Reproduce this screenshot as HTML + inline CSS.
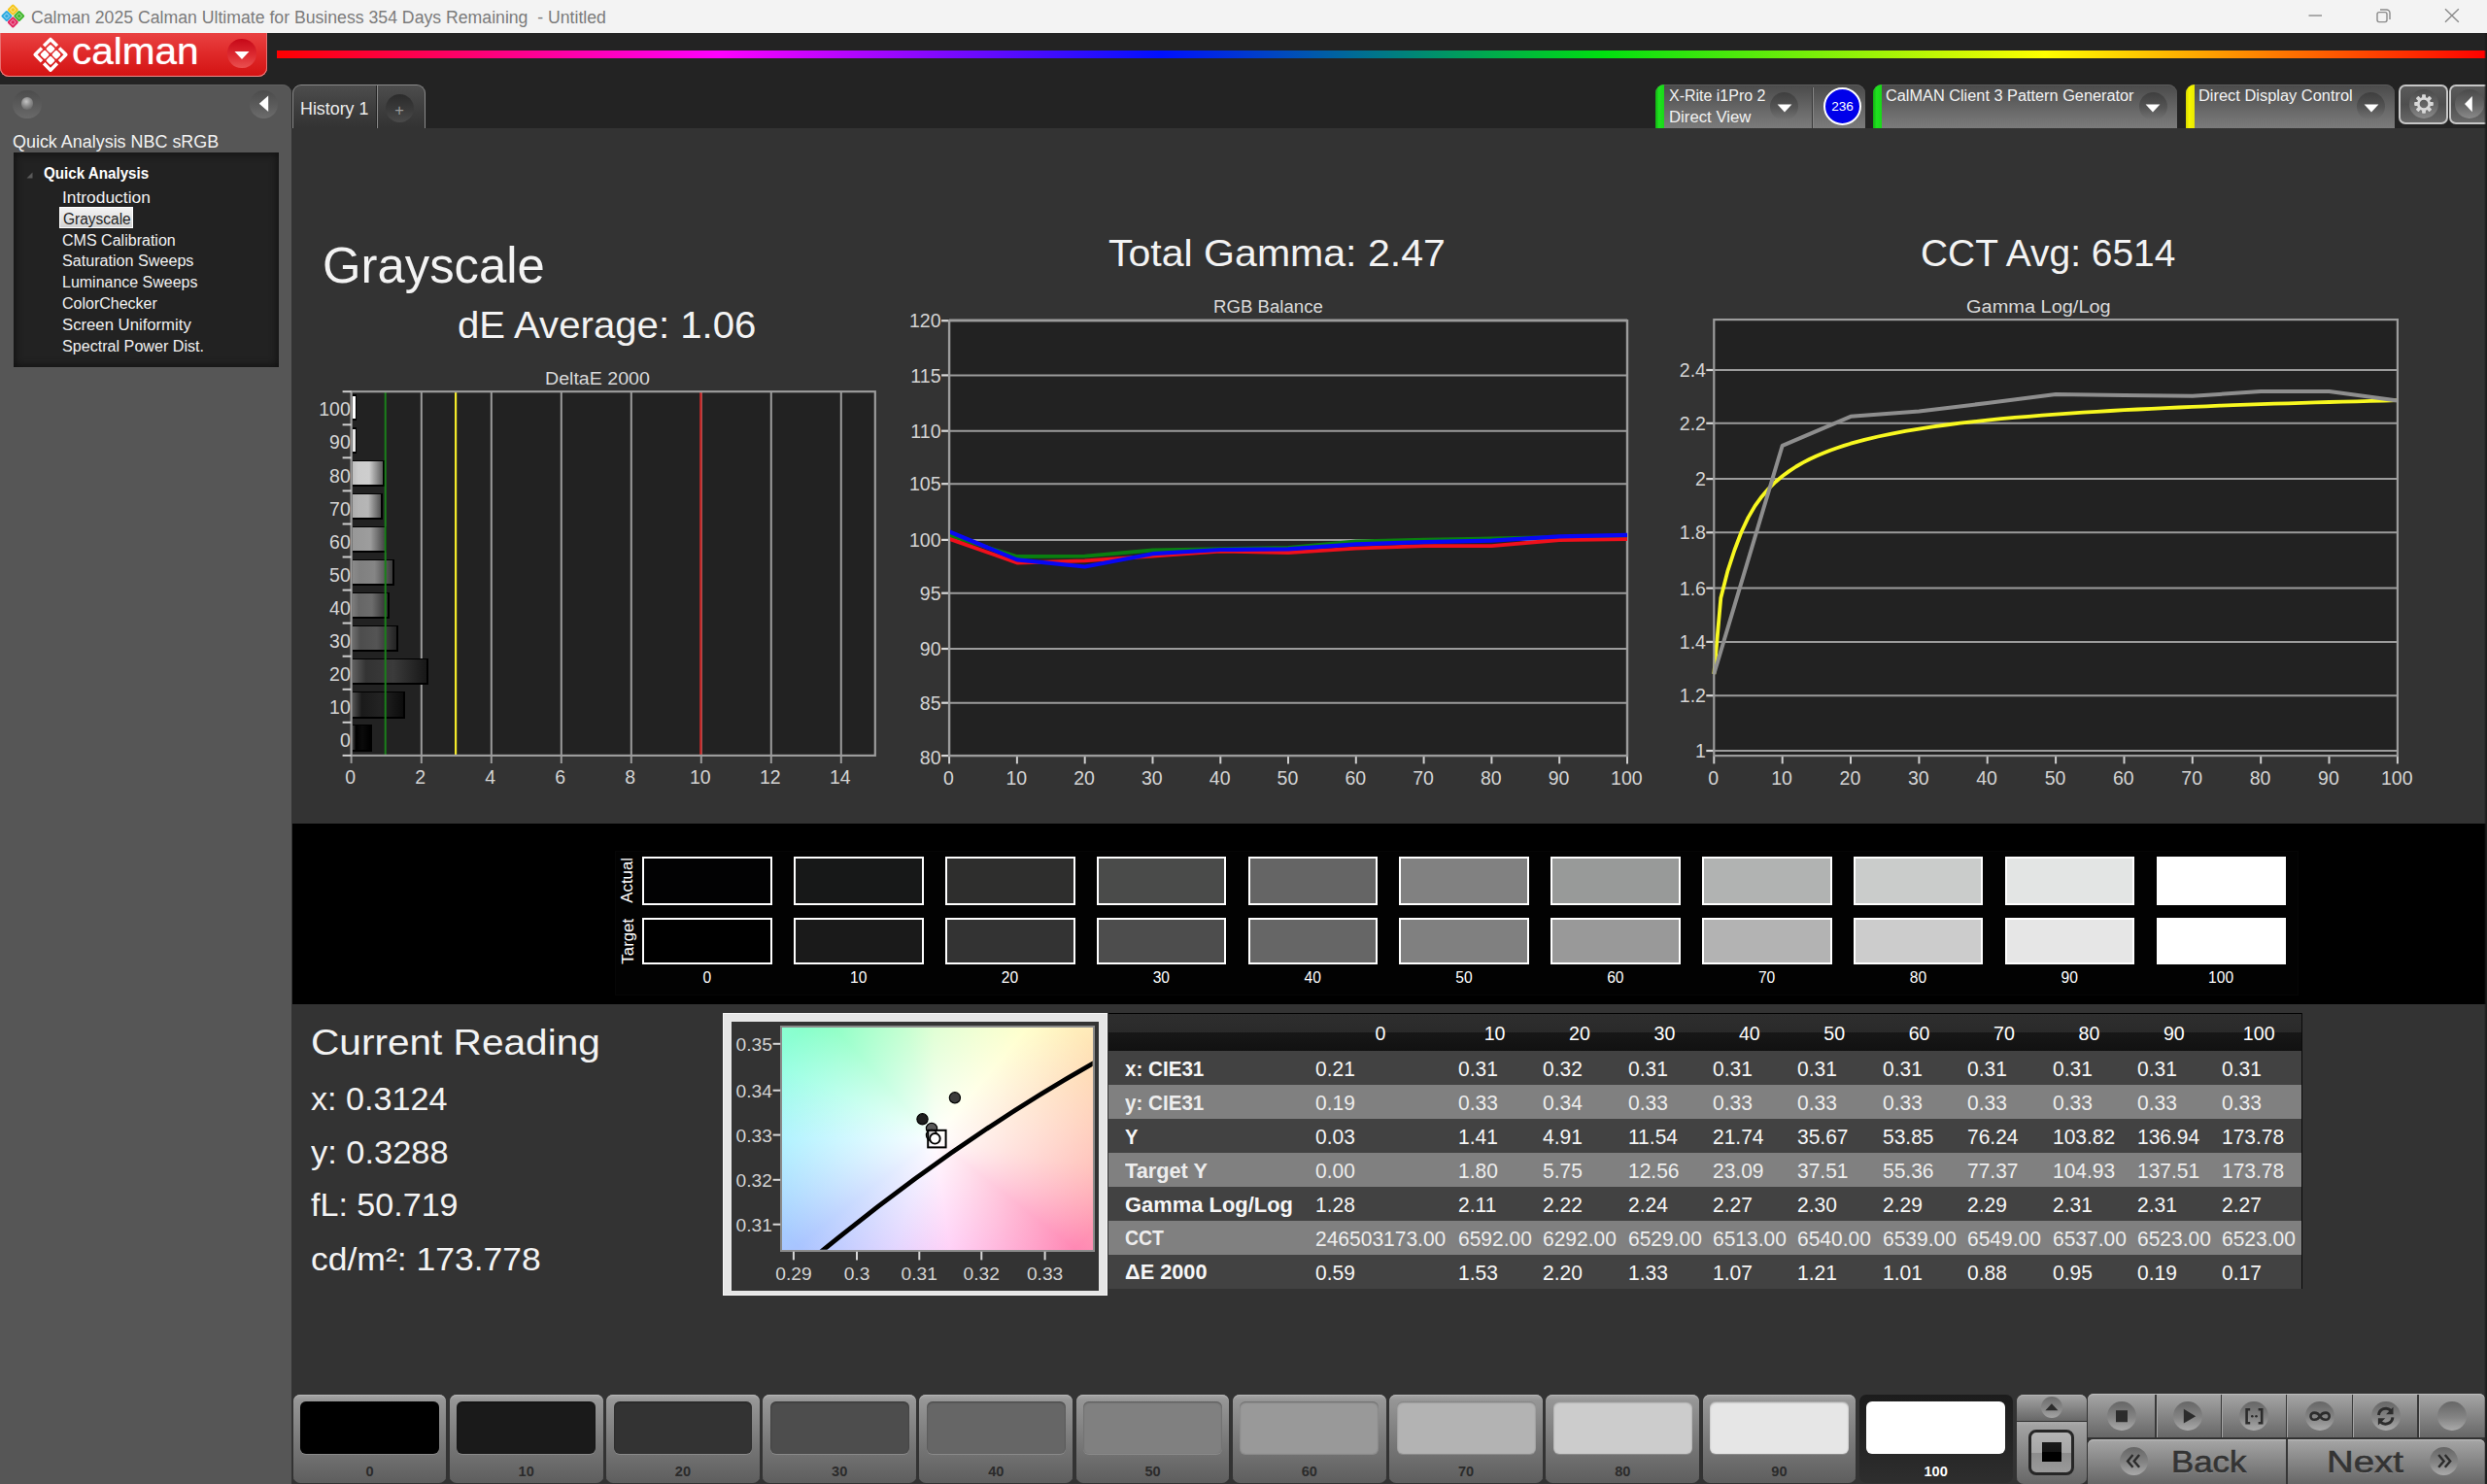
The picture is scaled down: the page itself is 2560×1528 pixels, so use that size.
<!DOCTYPE html>
<html lang="en"><head><meta charset="utf-8"><title>Calman 2025 Calman Ultimate for Business - Untitled</title><style>
html,body{margin:0;padding:0;}
body{width:2560px;height:1528px;background:#232323;overflow:hidden;position:relative;font-family:"Liberation Sans", sans-serif;}
#app{position:absolute;left:0;top:0;width:2560px;height:1528px;overflow:hidden;}
#app div{position:absolute;box-sizing:border-box;}
#app svg{position:absolute;overflow:visible;}
.t{position:absolute;white-space:pre;line-height:1;display:block;}
</style></head><body><div id="app">
<div style="left:0px;top:0px;width:2560px;height:34px;background:#f3f3f3;"></div>
<svg style="left:0;top:0" width="40" height="34" viewBox="0 0 40 34">
<g transform="translate(13.3,16.5)">
<rect x="-4.3" y="-4.3" width="8.6" height="8.6" rx="1.5" transform="translate(0,-6.4) rotate(45)" fill="#f5c518"/>
<rect x="-4.3" y="-4.3" width="8.6" height="8.6" rx="1.5" transform="translate(-6.4,0) rotate(45)" fill="#29a9e0"/>
<rect x="-4.3" y="-4.3" width="8.6" height="8.6" rx="1.5" transform="translate(6.4,0) rotate(45)" fill="#3cb528"/>
<rect x="-4.3" y="-4.3" width="8.6" height="8.6" rx="1.5" transform="translate(0,6.4) rotate(45)" fill="#e0245e"/>
<g fill="none" stroke="#fff" stroke-opacity=".45" stroke-width="1">
<rect x="-2" y="-2" width="4" height="4" transform="translate(0,-6.4) rotate(45)"/>
<rect x="-2" y="-2" width="4" height="4" transform="translate(-6.4,0) rotate(45)"/>
<rect x="-2" y="-2" width="4" height="4" transform="translate(6.4,0) rotate(45)"/>
<rect x="-2" y="-2" width="4" height="4" transform="translate(0,6.4) rotate(45)"/></g>
</g></svg>
<span class="t" style="top:9.00px;font-size:18px;color:#7b7b7b;left:32.28px;transform-origin:0 50%;transform:scaleX(0.9812);">Calman 2025 Calman Ultimate for Business 354 Days Remaining  - Untitled</span>
<svg style="left:2360px;top:0" width="200" height="34" viewBox="2360 0 200 34" fill="none" stroke="#8a8a8a" stroke-width="1.4">
<path d="M2376.5 16h13.5"/>
<rect x="2447" y="12.6" width="10" height="10" rx="2"/>
<path d="M2450 10h6.5a3.5 3.5 0 0 1 3.5 3.5v6.5"/>
<path d="M2517 9.3l13.8 13.5M2530.8 9.3l-13.8 13.5"/>
</svg>
<div style="left:0px;top:34px;width:275px;height:45px;background:linear-gradient(#e94242,#e02a2a 45%,#d31212);border-radius:0 0 9px 9px;box-shadow:inset 0 -1px 0 #f08a8a, inset -1px 0 0 #e87070, inset 1px 0 0 #e87070;"></div>
<svg style="left:30px;top:34px" width="44" height="44" viewBox="-22 -22 44 44">
<g transform="translate(0,0.3) rotate(45)" fill="#fff" stroke="none">
<rect x="-7.7" y="-7.7" width="7" height="7" rx="1.4"/><rect x="0.7" y="-7.7" width="7" height="7" rx="1.4"/>
<rect x="-7.7" y="0.7" width="7" height="7" rx="1.4"/><rect x="0.7" y="0.7" width="7" height="7" rx="1.4"/>
<g fill="none" stroke="#fff" stroke-width="3.5" stroke-linejoin="round" stroke-linecap="butt">
<path d="M-1.5 -11.2H-11.2V-1.5"/><path d="M1.5 -11.2H11.2V-1.5"/><path d="M-1.5 11.2H-11.2V1.5"/><path d="M1.5 11.2H11.2V1.5"/>
</g></g></svg>
<span class="t" style="top:34.00px;font-size:38px;color:#fff;left:74.48px;transform-origin:0 50%;transform:scaleX(1.0648);text-shadow:0 0 1px #ffd0d0;">calman</span>
<div style="left:234.3px;top:40.3px;width:29.4px;height:29.4px;border-radius:50%;background:linear-gradient(#c60818,#dc2a30 55%,#ea5050);"></div>
<svg style="left:240px;top:50px" width="20" height="14" viewBox="240 50 20 14"><path d="M241.5 53h15l-7.5 8z" fill="#fff"/></svg>
<div style="left:285px;top:52px;width:2275px;height:8px;background:linear-gradient(90deg,#ff0000 0%,#ff00ff 20%,#0010ff 40%,#00e010 60%,#ffff00 80%,#ff0000 100%);"></div>
<div style="left:0px;top:87px;width:300.4px;height:1441px;background:#565656;border-radius:0 9px 0 0;box-shadow:inset 0 1px 0 #606060;"></div>
<div style="left:13.3px;top:92.6px;width:29.6px;height:29.6px;border-radius:50%;background:linear-gradient(#4c4c4c,#5a5a5a 50%,#6a6a6a);"></div>
<div style="left:21.5px;top:100.3px;width:12.4px;height:12.4px;border-radius:50%;background:radial-gradient(circle at 42% 35%,#c4c4c4,#8a8a8a 45%,#555 100%);"></div>
<div style="left:256.7px;top:92.6px;width:29.6px;height:29.6px;border-radius:50%;background:linear-gradient(#4c4c4c,#5a5a5a 50%,#6c6c6c);"></div>
<svg style="left:264px;top:96px" width="16" height="22" viewBox="264 96 16 22"><path d="M276.2 98.4v16.6l-9.4 -8.3z" fill="#fff"/></svg>
<span class="t" style="top:136.00px;font-size:19.2px;color:#f2f2f2;left:13.23px;transform-origin:0 50%;transform:scaleX(0.9344);">Quick Analysis NBC sRGB</span>
<div style="left:14px;top:157px;width:273px;height:220.5px;background:#222;box-shadow:inset 0 0 8px 1px #101010;"></div>
<svg style="left:26px;top:176px" width="10" height="10" viewBox="0 0 10 10"><path d="M1.5 7.5h6v-6z" fill="#5a5a5a"/></svg>
<span class="t" style="top:171.00px;font-size:15.6px;color:#fff;font-weight:bold;left:44.88px;transform-origin:0 50%;transform:scaleX(0.9723);">Quick Analysis</span>
<span class="t" style="top:196.00px;font-size:15.6px;color:#f2f2f2;left:64.38px;transform-origin:0 50%;transform:scaleX(1.1147);">Introduction</span>
<div style="left:61.3px;top:213.3px;width:76px;height:21.8px;background:linear-gradient(#f4f4f4,#e6e6e6 50%,#cfcfcf);box-shadow:0 0 0 1px #fff inset;"></div>
<span class="t" style="top:218.00px;font-size:15.6px;color:#1e1e1e;left:64.58px;transform-origin:0 50%;transform:scaleX(0.9935);">Grayscale</span>
<span class="t" style="top:240.00px;font-size:15.6px;color:#f2f2f2;left:64.38px;transform-origin:0 50%;transform:scaleX(1.0283);">CMS Calibration</span>
<span class="t" style="top:261.00px;font-size:15.6px;color:#f2f2f2;left:64.38px;transform-origin:0 50%;transform:scaleX(1.0347);">Saturation Sweeps</span>
<span class="t" style="top:283.00px;font-size:15.6px;color:#f2f2f2;left:64.38px;transform-origin:0 50%;transform:scaleX(1.0245);">Luminance Sweeps</span>
<span class="t" style="top:305.00px;font-size:15.6px;color:#f2f2f2;left:64.38px;transform-origin:0 50%;transform:scaleX(1.0252);">ColorChecker</span>
<span class="t" style="top:327.00px;font-size:15.6px;color:#f2f2f2;left:64.38px;transform-origin:0 50%;transform:scaleX(1.0712);">Screen Uniformity</span>
<span class="t" style="top:349.00px;font-size:15.6px;color:#f2f2f2;left:64.38px;transform-origin:0 50%;transform:scaleX(1.0339);">Spectral Power Dist.</span>
<div style="left:300.4px;top:132px;width:2260px;height:1396px;background:#333;"></div>
<div style="left:300.5px;top:86.5px;width:137.5px;height:45.8px;border-radius:9px 9px 0 0;border:1.5px solid #8a8a8a;border-bottom:none;background:linear-gradient(#4d4d4d,#3c3c3c 60%,#333);"></div>
<div style="left:387px;top:88px;width:2.4px;height:44.3px;background:linear-gradient(90deg,#222 0,#222 45%,#8a8a8a 45%);"></div>
<span class="t" style="top:103.00px;font-size:18px;color:#ececec;left:309.08px;transform-origin:0 50%;transform:scaleX(0.9919);">History 1</span>
<div style="left:396.5px;top:97.3px;width:29px;height:29px;border-radius:50%;background:linear-gradient(#2b2b2b,#3a3a3a 55%,#4a4a4a);"></div>
<span class="t" style="top:105.00px;font-size:16.5px;color:#9a9a9a;left:411.20px;transform-origin:50% 50%;transform:translateX(-50%);">+</span>
<div style="left:1704px;top:86.8px;width:215.5px;height:45.4px;border-radius:9px 9px 0 0;overflow:hidden;background:linear-gradient(#4a4a4a,#595959 30%,#6e6e6e 70%,#7b7b7b);box-shadow:inset 0 1px 0 #5c5c5c;"><div style="left:0;top:0;width:8.6px;height:46px;background:linear-gradient(90deg,#12b012,#20e020 40%,#18d818);"></div></div>
<span class="t" style="top:91.00px;font-size:15.6px;color:#f2f2f2;left:1717.68px;transform-origin:0 50%;transform:scaleX(1.0244);">X-Rite i1Pro 2</span>
<span class="t" style="top:113.00px;font-size:15.6px;color:#f2f2f2;left:1717.98px;transform-origin:0 50%;transform:scaleX(1.0747);">Direct View</span>
<div style="left:1821.9px;top:94.6px;width:29.2px;height:29.2px;border-radius:50%;background:linear-gradient(#3e3e3e,#555 55%,#747474);"></div>
<svg style="left:1827.5px;top:106.2px" width="18" height="12" viewBox="-9 -3 18 12"><path d="M-7.4 -1.4h14.8l-7.4 7.8z" fill="#fff"/></svg>
<div style="left:1865px;top:90px;width:2.4px;height:42px;background:linear-gradient(90deg,#3a3a3a 0,#3a3a3a 50%,#868686 50%);"></div>
<div style="left:1877px;top:89.7px;width:39px;height:39px;border-radius:50%;background:#0000ea;border:2px solid #fff;"></div>
<span class="t" style="top:103.00px;font-size:13.6px;color:#fff;left:1896.60px;transform-origin:50% 50%;transform:translateX(-50%);">236</span>
<div style="left:1928px;top:86.8px;width:313px;height:45.4px;border-radius:9px 9px 0 0;overflow:hidden;background:linear-gradient(#4a4a4a,#595959 30%,#6e6e6e 70%,#7b7b7b);box-shadow:inset 0 1px 0 #5c5c5c;"><div style="left:0;top:0;width:8.6px;height:46px;background:linear-gradient(90deg,#12b012,#20e020 40%,#18d818);"></div></div>
<span class="t" style="top:91.00px;font-size:15.6px;color:#f2f2f2;left:1941.48px;transform-origin:0 50%;transform:scaleX(1.0456);">CalMAN Client 3 Pattern Generator</span>
<div style="left:2201.8px;top:94.6px;width:29.2px;height:29.2px;border-radius:50%;background:linear-gradient(#3e3e3e,#555 55%,#747474);"></div>
<svg style="left:2207.4px;top:106.2px" width="18" height="12" viewBox="-9 -3 18 12"><path d="M-7.4 -1.4h14.8l-7.4 7.8z" fill="#fff"/></svg>
<div style="left:2250px;top:86.8px;width:215px;height:45.4px;border-radius:9px 9px 0 0;overflow:hidden;background:linear-gradient(#4a4a4a,#595959 30%,#6e6e6e 70%,#7b7b7b);box-shadow:inset 0 1px 0 #5c5c5c;"><div style="left:0;top:0;width:8.6px;height:46px;background:linear-gradient(90deg,#d8d800,#f6f600 40%,#eaea00);"></div></div>
<span class="t" style="top:91.00px;font-size:15.6px;color:#f2f2f2;left:2262.68px;transform-origin:0 50%;transform:scaleX(1.0527);">Direct Display Control</span>
<div style="left:2426px;top:94.6px;width:29.2px;height:29.2px;border-radius:50%;background:linear-gradient(#3e3e3e,#555 55%,#747474);"></div>
<svg style="left:2431.6px;top:106.2px" width="18" height="12" viewBox="-9 -3 18 12"><path d="M-7.4 -1.4h14.8l-7.4 7.8z" fill="#fff"/></svg>
<div style="left:2469.4px;top:86.7px;width:50.6px;height:41.5px;border-radius:7px;border:2px solid #c6c6c6;background:linear-gradient(#5a5a5a,#4e4e4e 50%,#686868);"></div>
<div style="left:2479.7px;top:92.4px;width:30px;height:30px;border-radius:50%;background:linear-gradient(#4a4a4a,#666 55%,#8a8a8a);"></div>
<svg style="left:2482.7px;top:95.4px" width="24" height="24" viewBox="-12 -12 24 24"><g fill="#d8d8d8"><rect x="-1.9" y="-9.8" width="3.8" height="4.2" rx="0.8" transform="rotate(0)"/><rect x="-1.9" y="-9.8" width="3.8" height="4.2" rx="0.8" transform="rotate(45)"/><rect x="-1.9" y="-9.8" width="3.8" height="4.2" rx="0.8" transform="rotate(90)"/><rect x="-1.9" y="-9.8" width="3.8" height="4.2" rx="0.8" transform="rotate(135)"/><rect x="-1.9" y="-9.8" width="3.8" height="4.2" rx="0.8" transform="rotate(180)"/><rect x="-1.9" y="-9.8" width="3.8" height="4.2" rx="0.8" transform="rotate(225)"/><rect x="-1.9" y="-9.8" width="3.8" height="4.2" rx="0.8" transform="rotate(270)"/><rect x="-1.9" y="-9.8" width="3.8" height="4.2" rx="0.8" transform="rotate(315)"/></g><circle r="5.7" fill="none" stroke="#d8d8d8" stroke-width="2.7"/></svg>
<div style="left:2520.8px;top:86.7px;width:50px;height:41.5px;border-radius:7px;border:2px solid #c6c6c6;background:linear-gradient(#5a5a5a,#4e4e4e 50%,#686868);"></div>
<div style="left:2527px;top:92.4px;width:30px;height:30px;border-radius:50%;background:linear-gradient(#4a4a4a,#666 55%,#8a8a8a);"></div>
<svg style="left:2534px;top:96px" width="16" height="24" viewBox="2534 96 16 24"><path d="M2544.8 99v16.2l-7.8 -8.1z" fill="#fff"/></svg>
<span class="t" style="top:247.00px;font-size:52px;color:#f3f3f3;left:332.32px;transform-origin:0 50%;transform:scaleX(0.9777);">Grayscale</span>
<span class="t" style="top:315.00px;font-size:39.3px;color:#f3f3f3;left:470.63px;transform-origin:0 50%;transform:scaleX(1.0218);">dE Average: 1.06</span>
<span class="t" style="top:380.00px;font-size:19.2px;color:#dadada;left:560.93px;transform-origin:0 50%;transform:scaleX(1.0211);">DeltaE 2000</span>
<span class="t" style="top:241.00px;font-size:39.3px;color:#f3f3f3;left:1140.63px;transform-origin:0 50%;transform:scaleX(1.0447);">Total Gamma: 2.47</span>
<span class="t" style="top:306.00px;font-size:19.2px;color:#dadada;left:1249.23px;transform-origin:0 50%;transform:scaleX(0.9706);">RGB Balance</span>
<span class="t" style="top:241.00px;font-size:39.3px;color:#f3f3f3;left:1976.53px;transform-origin:0 50%;transform:scaleX(0.9894);">CCT Avg: 6514</span>
<span class="t" style="top:306.00px;font-size:19.2px;color:#dadada;left:2024.43px;transform-origin:0 50%;transform:scaleX(1.0406);">Gamma Log/Log</span>
<div style="left:361.6px;top:403.2px;width:539.2px;height:374.7px;background:#222;"></div>
<svg style="left:0;top:0;pointer-events:none" width="2560" height="1528" viewBox="0 0 2560 1528" fill="none"><path d="M433.8 403.2L433.8 785.9" stroke="#9c9c9c" stroke-width="2"/><path d="M505.8 403.2L505.8 785.9" stroke="#9c9c9c" stroke-width="2"/><path d="M577.8 403.2L577.8 785.9" stroke="#9c9c9c" stroke-width="2"/><path d="M649.8 403.2L649.8 785.9" stroke="#9c9c9c" stroke-width="2"/><path d="M721.8 403.2L721.8 785.9" stroke="#9c9c9c" stroke-width="2"/><path d="M793.8 403.2L793.8 785.9" stroke="#9c9c9c" stroke-width="2"/><path d="M865.8 403.2L865.8 785.9" stroke="#9c9c9c" stroke-width="2"/><path d="M361.6 777.9L361.6 785.9" stroke="#9c9c9c" stroke-width="2"/></svg>
<div style="left:362.6px;top:746.436px;width:20.64px;height:27.2px;background:linear-gradient(90deg,#444444 0,#000000 18%,#0a0a0a 55%,#000000 100%);border:2px solid #000;border-left:none;border-top-width:1px;"></div>
<div style="left:362.6px;top:712.373px;width:54.48px;height:27.2px;background:linear-gradient(90deg,#525252 0,#1a1a1a 18%,#232323 55%,#0c0c0c 100%);border:2px solid #000;border-left:none;border-top-width:1px;"></div>
<div style="left:362.6px;top:678.309px;width:78.6px;height:27.2px;background:linear-gradient(90deg,#606060 0,#333333 18%,#3b3b3b 55%,#171717 100%);border:2px solid #000;border-left:none;border-top-width:1px;"></div>
<div style="left:362.6px;top:644.245px;width:47.28px;height:27.2px;background:linear-gradient(90deg,#6e6e6e 0,#4d4d4d 18%,#545454 55%,#232323 100%);border:2px solid #000;border-left:none;border-top-width:1px;"></div>
<div style="left:362.6px;top:610.182px;width:37.92px;height:27.2px;background:linear-gradient(90deg,#7c7c7c 0,#666666 18%,#6c6c6c 55%,#2e2e2e 100%);border:2px solid #000;border-left:none;border-top-width:1px;"></div>
<div style="left:362.6px;top:576.118px;width:42.96px;height:27.2px;background:linear-gradient(90deg,#8a8a8a 0,#808080 18%,#858585 55%,#3a3a3a 100%);border:2px solid #000;border-left:none;border-top-width:1px;"></div>
<div style="left:362.6px;top:542.055px;width:35.76px;height:27.2px;background:linear-gradient(90deg,#989898 0,#999999 18%,#9d9d9d 55%,#454545 100%);border:2px solid #000;border-left:none;border-top-width:1px;"></div>
<div style="left:362.6px;top:507.991px;width:31.08px;height:27.2px;background:linear-gradient(90deg,#acacac 0,#b3b3b3 18%,#b6b6b6 55%,#515151 100%);border:2px solid #000;border-left:none;border-top-width:1px;"></div>
<div style="left:362.6px;top:473.927px;width:33.6px;height:27.2px;background:linear-gradient(90deg,#bebebe 0,#cccccc 18%,#cecece 55%,#5c5c5c 100%);border:2px solid #000;border-left:none;border-top-width:1px;"></div>
<div style="left:362.6px;top:439.864px;width:4.4px;height:27.2px;background:#e6e6e6;border:2px solid #000;border-left:none;border-top-width:2.4px;border-right-width:1.4px;"></div>
<div style="left:362.6px;top:405.8px;width:4.4px;height:27.2px;background:#ffffff;border:2px solid #000;border-left:none;border-top-width:2.4px;border-right-width:1.4px;"></div>
<span class="t" style="top:753.00px;font-size:19.5px;color:#d4d4d4;left:360.78px;transform-origin:100% 50%;transform:translateX(-100%);">0</span>
<span class="t" style="top:719.00px;font-size:19.5px;color:#d4d4d4;left:360.78px;transform-origin:100% 50%;transform:translateX(-100%);">10</span>
<span class="t" style="top:685.00px;font-size:19.5px;color:#d4d4d4;left:360.78px;transform-origin:100% 50%;transform:translateX(-100%);">20</span>
<span class="t" style="top:651.00px;font-size:19.5px;color:#d4d4d4;left:360.78px;transform-origin:100% 50%;transform:translateX(-100%);">30</span>
<span class="t" style="top:617.00px;font-size:19.5px;color:#d4d4d4;left:360.78px;transform-origin:100% 50%;transform:translateX(-100%);">40</span>
<span class="t" style="top:583.00px;font-size:19.5px;color:#d4d4d4;left:360.78px;transform-origin:100% 50%;transform:translateX(-100%);">50</span>
<span class="t" style="top:549.00px;font-size:19.5px;color:#d4d4d4;left:360.78px;transform-origin:100% 50%;transform:translateX(-100%);">60</span>
<span class="t" style="top:515.00px;font-size:19.5px;color:#d4d4d4;left:360.78px;transform-origin:100% 50%;transform:translateX(-100%);">70</span>
<span class="t" style="top:481.00px;font-size:19.5px;color:#d4d4d4;left:360.78px;transform-origin:100% 50%;transform:translateX(-100%);">80</span>
<span class="t" style="top:446.00px;font-size:19.5px;color:#d4d4d4;left:360.78px;transform-origin:100% 50%;transform:translateX(-100%);">90</span>
<span class="t" style="top:412.00px;font-size:19.5px;color:#d4d4d4;left:360.78px;transform-origin:100% 50%;transform:translateX(-100%);">100</span>
<span class="t" style="top:791.00px;font-size:19.5px;color:#d4d4d4;left:360.80px;transform-origin:50% 50%;transform:translateX(-50%);">0</span>
<span class="t" style="top:791.00px;font-size:19.5px;color:#d4d4d4;left:432.80px;transform-origin:50% 50%;transform:translateX(-50%);">2</span>
<span class="t" style="top:791.00px;font-size:19.5px;color:#d4d4d4;left:504.80px;transform-origin:50% 50%;transform:translateX(-50%);">4</span>
<span class="t" style="top:791.00px;font-size:19.5px;color:#d4d4d4;left:576.80px;transform-origin:50% 50%;transform:translateX(-50%);">6</span>
<span class="t" style="top:791.00px;font-size:19.5px;color:#d4d4d4;left:648.80px;transform-origin:50% 50%;transform:translateX(-50%);">8</span>
<span class="t" style="top:791.00px;font-size:19.5px;color:#d4d4d4;left:720.80px;transform-origin:50% 50%;transform:translateX(-50%);">10</span>
<span class="t" style="top:791.00px;font-size:19.5px;color:#d4d4d4;left:792.80px;transform-origin:50% 50%;transform:translateX(-50%);">12</span>
<span class="t" style="top:791.00px;font-size:19.5px;color:#d4d4d4;left:864.80px;transform-origin:50% 50%;transform:translateX(-50%);">14</span>
<div style="left:977.1px;top:330.2px;width:697.9px;height:447.9px;background:#222;"></div>
<span class="t" style="top:321.00px;font-size:19.6px;color:#d4d4d4;left:968.59px;transform-origin:100% 50%;transform:translateX(-100%);">120</span>
<span class="t" style="top:378.00px;font-size:19.6px;color:#d4d4d4;left:968.59px;transform-origin:100% 50%;transform:translateX(-100%);">115</span>
<span class="t" style="top:435.00px;font-size:19.6px;color:#d4d4d4;left:968.59px;transform-origin:100% 50%;transform:translateX(-100%);">110</span>
<span class="t" style="top:489.00px;font-size:19.6px;color:#d4d4d4;left:968.59px;transform-origin:100% 50%;transform:translateX(-100%);">105</span>
<span class="t" style="top:547.00px;font-size:19.6px;color:#d4d4d4;left:968.59px;transform-origin:100% 50%;transform:translateX(-100%);">100</span>
<span class="t" style="top:602.00px;font-size:19.6px;color:#d4d4d4;left:968.59px;transform-origin:100% 50%;transform:translateX(-100%);">95</span>
<span class="t" style="top:659.00px;font-size:19.6px;color:#d4d4d4;left:968.59px;transform-origin:100% 50%;transform:translateX(-100%);">90</span>
<span class="t" style="top:715.00px;font-size:19.6px;color:#d4d4d4;left:968.59px;transform-origin:100% 50%;transform:translateX(-100%);">85</span>
<span class="t" style="top:771.00px;font-size:19.6px;color:#d4d4d4;left:968.59px;transform-origin:100% 50%;transform:translateX(-100%);">80</span>
<span class="t" style="top:792.00px;font-size:19.5px;color:#d4d4d4;left:976.50px;transform-origin:50% 50%;transform:translateX(-50%);">0</span>
<span class="t" style="top:792.00px;font-size:19.5px;color:#d4d4d4;left:1046.29px;transform-origin:50% 50%;transform:translateX(-50%);">10</span>
<span class="t" style="top:792.00px;font-size:19.5px;color:#d4d4d4;left:1116.08px;transform-origin:50% 50%;transform:translateX(-50%);">20</span>
<span class="t" style="top:792.00px;font-size:19.5px;color:#d4d4d4;left:1185.87px;transform-origin:50% 50%;transform:translateX(-50%);">30</span>
<span class="t" style="top:792.00px;font-size:19.5px;color:#d4d4d4;left:1255.66px;transform-origin:50% 50%;transform:translateX(-50%);">40</span>
<span class="t" style="top:792.00px;font-size:19.5px;color:#d4d4d4;left:1325.45px;transform-origin:50% 50%;transform:translateX(-50%);">50</span>
<span class="t" style="top:792.00px;font-size:19.5px;color:#d4d4d4;left:1395.24px;transform-origin:50% 50%;transform:translateX(-50%);">60</span>
<span class="t" style="top:792.00px;font-size:19.5px;color:#d4d4d4;left:1465.03px;transform-origin:50% 50%;transform:translateX(-50%);">70</span>
<span class="t" style="top:792.00px;font-size:19.5px;color:#d4d4d4;left:1534.82px;transform-origin:50% 50%;transform:translateX(-50%);">80</span>
<span class="t" style="top:792.00px;font-size:19.5px;color:#d4d4d4;left:1604.61px;transform-origin:50% 50%;transform:translateX(-50%);">90</span>
<span class="t" style="top:792.00px;font-size:19.5px;color:#d4d4d4;left:1674.40px;transform-origin:50% 50%;transform:translateX(-50%);">100</span>
<div style="left:1764.3px;top:329.1px;width:703.6px;height:449px;background:#222;"></div>
<span class="t" style="top:372.00px;font-size:19.6px;color:#d4d4d4;left:1755.99px;transform-origin:100% 50%;transform:translateX(-100%);">2.4</span>
<span class="t" style="top:427.00px;font-size:19.6px;color:#d4d4d4;left:1755.99px;transform-origin:100% 50%;transform:translateX(-100%);">2.2</span>
<span class="t" style="top:484.00px;font-size:19.6px;color:#d4d4d4;left:1755.99px;transform-origin:100% 50%;transform:translateX(-100%);">2</span>
<span class="t" style="top:539.00px;font-size:19.6px;color:#d4d4d4;left:1755.99px;transform-origin:100% 50%;transform:translateX(-100%);">1.8</span>
<span class="t" style="top:597.00px;font-size:19.6px;color:#d4d4d4;left:1755.99px;transform-origin:100% 50%;transform:translateX(-100%);">1.6</span>
<span class="t" style="top:652.00px;font-size:19.6px;color:#d4d4d4;left:1755.99px;transform-origin:100% 50%;transform:translateX(-100%);">1.4</span>
<span class="t" style="top:707.00px;font-size:19.6px;color:#d4d4d4;left:1755.99px;transform-origin:100% 50%;transform:translateX(-100%);">1.2</span>
<span class="t" style="top:764.00px;font-size:19.6px;color:#d4d4d4;left:1755.99px;transform-origin:100% 50%;transform:translateX(-100%);">1</span>
<span class="t" style="top:792.00px;font-size:19.5px;color:#d4d4d4;left:1763.70px;transform-origin:50% 50%;transform:translateX(-50%);">0</span>
<span class="t" style="top:792.00px;font-size:19.5px;color:#d4d4d4;left:1834.06px;transform-origin:50% 50%;transform:translateX(-50%);">10</span>
<span class="t" style="top:792.00px;font-size:19.5px;color:#d4d4d4;left:1904.42px;transform-origin:50% 50%;transform:translateX(-50%);">20</span>
<span class="t" style="top:792.00px;font-size:19.5px;color:#d4d4d4;left:1974.78px;transform-origin:50% 50%;transform:translateX(-50%);">30</span>
<span class="t" style="top:792.00px;font-size:19.5px;color:#d4d4d4;left:2045.14px;transform-origin:50% 50%;transform:translateX(-50%);">40</span>
<span class="t" style="top:792.00px;font-size:19.5px;color:#d4d4d4;left:2115.50px;transform-origin:50% 50%;transform:translateX(-50%);">50</span>
<span class="t" style="top:792.00px;font-size:19.5px;color:#d4d4d4;left:2185.86px;transform-origin:50% 50%;transform:translateX(-50%);">60</span>
<span class="t" style="top:792.00px;font-size:19.5px;color:#d4d4d4;left:2256.22px;transform-origin:50% 50%;transform:translateX(-50%);">70</span>
<span class="t" style="top:792.00px;font-size:19.5px;color:#d4d4d4;left:2326.58px;transform-origin:50% 50%;transform:translateX(-50%);">80</span>
<span class="t" style="top:792.00px;font-size:19.5px;color:#d4d4d4;left:2396.94px;transform-origin:50% 50%;transform:translateX(-50%);">90</span>
<span class="t" style="top:792.00px;font-size:19.5px;color:#d4d4d4;left:2467.30px;transform-origin:50% 50%;transform:translateX(-50%);">100</span>
<div style="left:301.4px;top:848px;width:2260px;height:185.8px;background:#000;"></div>
<div style="left:632.5px;top:876px;width:1733.5px;height:148.6px;background:#020202;border:1px solid #060606;"></div>
<div style="left:661.3px;top:882px;width:133.6px;height:49.5px;background:#020203;border:2px solid #fff;"></div>
<div style="left:661.3px;top:945px;width:133.6px;height:48.3px;background:#000000;border:2px solid #fff;"></div>
<span class="t" style="top:999.00px;font-size:15.6px;color:#fff;left:727.90px;transform-origin:50% 50%;transform:translateX(-50%);">0</span>
<div style="left:817.12px;top:882px;width:133.6px;height:49.5px;background:#171818;border:2px solid #fff;"></div>
<div style="left:817.12px;top:945px;width:133.6px;height:48.3px;background:#1a1a1a;border:2px solid #fff;"></div>
<span class="t" style="top:999.00px;font-size:15.6px;color:#fff;left:883.72px;transform-origin:50% 50%;transform:translateX(-50%);">10</span>
<div style="left:972.94px;top:882px;width:133.6px;height:49.5px;background:#2e2e2d;border:2px solid #fff;"></div>
<div style="left:972.94px;top:945px;width:133.6px;height:48.3px;background:#333333;border:2px solid #fff;"></div>
<span class="t" style="top:999.00px;font-size:15.6px;color:#fff;left:1039.54px;transform-origin:50% 50%;transform:translateX(-50%);">20</span>
<div style="left:1128.76px;top:882px;width:133.6px;height:49.5px;background:#4a4b4a;border:2px solid #fff;"></div>
<div style="left:1128.76px;top:945px;width:133.6px;height:48.3px;background:#4d4d4d;border:2px solid #fff;"></div>
<span class="t" style="top:999.00px;font-size:15.6px;color:#fff;left:1195.36px;transform-origin:50% 50%;transform:translateX(-50%);">30</span>
<div style="left:1284.58px;top:882px;width:133.6px;height:49.5px;background:#656565;border:2px solid #fff;"></div>
<div style="left:1284.58px;top:945px;width:133.6px;height:48.3px;background:#666666;border:2px solid #fff;"></div>
<span class="t" style="top:999.00px;font-size:15.6px;color:#fff;left:1351.18px;transform-origin:50% 50%;transform:translateX(-50%);">40</span>
<div style="left:1440.4px;top:882px;width:133.6px;height:49.5px;background:#818181;border:2px solid #fff;"></div>
<div style="left:1440.4px;top:945px;width:133.6px;height:48.3px;background:#808080;border:2px solid #fff;"></div>
<span class="t" style="top:999.00px;font-size:15.6px;color:#fff;left:1507.00px;transform-origin:50% 50%;transform:translateX(-50%);">50</span>
<div style="left:1596.22px;top:882px;width:133.6px;height:49.5px;background:#989a99;border:2px solid #fff;"></div>
<div style="left:1596.22px;top:945px;width:133.6px;height:48.3px;background:#999999;border:2px solid #fff;"></div>
<span class="t" style="top:999.00px;font-size:15.6px;color:#fff;left:1662.82px;transform-origin:50% 50%;transform:translateX(-50%);">60</span>
<div style="left:1752.04px;top:882px;width:133.6px;height:49.5px;background:#b1b3b2;border:2px solid #fff;"></div>
<div style="left:1752.04px;top:945px;width:133.6px;height:48.3px;background:#b3b3b3;border:2px solid #fff;"></div>
<span class="t" style="top:999.00px;font-size:15.6px;color:#fff;left:1818.64px;transform-origin:50% 50%;transform:translateX(-50%);">70</span>
<div style="left:1907.86px;top:882px;width:133.6px;height:49.5px;background:#cacccb;border:2px solid #fff;"></div>
<div style="left:1907.86px;top:945px;width:133.6px;height:48.3px;background:#cccccc;border:2px solid #fff;"></div>
<span class="t" style="top:999.00px;font-size:15.6px;color:#fff;left:1974.46px;transform-origin:50% 50%;transform:translateX(-50%);">80</span>
<div style="left:2063.68px;top:882px;width:133.6px;height:49.5px;background:#e3e5e4;border:2px solid #fff;"></div>
<div style="left:2063.68px;top:945px;width:133.6px;height:48.3px;background:#e6e6e6;border:2px solid #fff;"></div>
<span class="t" style="top:999.00px;font-size:15.6px;color:#fff;left:2130.28px;transform-origin:50% 50%;transform:translateX(-50%);">90</span>
<div style="left:2219.5px;top:882px;width:133.6px;height:49.5px;background:#ffffff;border:2px solid #fff;"></div>
<div style="left:2219.5px;top:945px;width:133.6px;height:48.3px;background:#ffffff;border:2px solid #fff;"></div>
<span class="t" style="top:999.00px;font-size:15.6px;color:#fff;left:2286.10px;transform-origin:50% 50%;transform:translateX(-50%);">100</span>
<span class="t" style="left:646.4px;top:908.4px;font-size:15.6px;color:#fff;transform-origin:0 0;transform:rotate(-90deg) translate(-50%,-50%) scaleX(1.0762);">Actual</span>
<span class="t" style="left:647.2px;top:971.0px;font-size:15.6px;color:#fff;transform-origin:0 0;transform:rotate(-90deg) translate(-50%,-50%) scaleX(1.0808);">Target</span>
<span class="t" style="top:1055.00px;font-size:37.6px;color:#f3f3f3;left:320.10px;transform-origin:0 50%;transform:scaleX(1.0801);">Current Reading</span>
<span class="t" style="top:1116.00px;font-size:32.4px;color:#f3f3f3;left:319.70px;transform-origin:0 50%;transform:scaleX(1.0550);">x: 0.3124</span>
<span class="t" style="top:1171.00px;font-size:32.4px;color:#f3f3f3;left:319.70px;transform-origin:0 50%;transform:scaleX(1.0625);">y: 0.3288</span>
<span class="t" style="top:1225.00px;font-size:32.4px;color:#f3f3f3;left:319.70px;transform-origin:0 50%;transform:scaleX(1.0520);">fL: 50.719</span>
<span class="t" style="top:1281.00px;font-size:32.4px;color:#f3f3f3;left:319.70px;transform-origin:0 50%;transform:scaleX(1.0959);">cd/m²: 173.778</span>
<div style="left:744px;top:1043px;width:396px;height:290.6px;background:#e6e6e6;box-shadow:0 0 0 1px #f6f6f6 inset;"></div>
<div style="left:753px;top:1052.2px;width:378px;height:276.4px;background:#333;"></div>
<div style="left:803.3px;top:1055.9px;width:323.4px;height:232.8px;background:radial-gradient(ellipse 62% 70% at 50% 50%,rgba(255,255,255,1) 0,rgba(255,255,255,.85) 12%,rgba(255,255,255,0) 100%),conic-gradient(from 0deg at 49% 50%,#d4ffc4 0deg,#ffffc4 40deg,#ffd8b0 68deg,#ffb8b0 100deg,#ff88b4 128deg,#ffc0f4 172deg,#d8c8ff 200deg,#a8c4ff 232deg,#a0f0ff 270deg,#90ffe0 295deg,#84ffc0 318deg,#b0ffc0 345deg,#d4ffc4 360deg);border:2px solid #8a8a8a;"></div>
<span class="t" style="top:1066.00px;font-size:19.2px;color:#d4d4d4;left:794.88px;transform-origin:100% 50%;transform:translateX(-100%);">0.35</span>
<span class="t" style="top:1114.00px;font-size:19.2px;color:#d4d4d4;left:794.88px;transform-origin:100% 50%;transform:translateX(-100%);">0.34</span>
<span class="t" style="top:1160.00px;font-size:19.2px;color:#d4d4d4;left:794.88px;transform-origin:100% 50%;transform:translateX(-100%);">0.33</span>
<span class="t" style="top:1206.00px;font-size:19.2px;color:#d4d4d4;left:794.88px;transform-origin:100% 50%;transform:translateX(-100%);">0.32</span>
<span class="t" style="top:1252.00px;font-size:19.2px;color:#d4d4d4;left:794.88px;transform-origin:100% 50%;transform:translateX(-100%);">0.31</span>
<span class="t" style="top:1302.00px;font-size:19.2px;color:#d4d4d4;left:816.90px;transform-origin:50% 50%;transform:translateX(-50%);">0.29</span>
<span class="t" style="top:1302.00px;font-size:19.2px;color:#d4d4d4;left:882.00px;transform-origin:50% 50%;transform:translateX(-50%);">0.3</span>
<span class="t" style="top:1302.00px;font-size:19.2px;color:#d4d4d4;left:946.30px;transform-origin:50% 50%;transform:translateX(-50%);">0.31</span>
<span class="t" style="top:1302.00px;font-size:19.2px;color:#d4d4d4;left:1010.30px;transform-origin:50% 50%;transform:translateX(-50%);">0.32</span>
<span class="t" style="top:1302.00px;font-size:19.2px;color:#d4d4d4;left:1075.60px;transform-origin:50% 50%;transform:translateX(-50%);">0.33</span>
<div style="left:1141.2px;top:1043.4px;width:1228.8px;height:39.2px;background:linear-gradient(#2e2e2e 0,#2a2a2a 50%,#171717 50%,#111 100%);border-top:1px solid #000;"></div>
<span class="t" style="top:1055.00px;font-size:19.6px;color:#fff;left:1421.00px;transform-origin:50% 50%;transform:translateX(-50%);">0</span>
<span class="t" style="top:1055.00px;font-size:19.6px;color:#fff;left:1538.60px;transform-origin:50% 50%;transform:translateX(-50%);">10</span>
<span class="t" style="top:1055.00px;font-size:19.6px;color:#fff;left:1626.00px;transform-origin:50% 50%;transform:translateX(-50%);">20</span>
<span class="t" style="top:1055.00px;font-size:19.6px;color:#fff;left:1713.40px;transform-origin:50% 50%;transform:translateX(-50%);">30</span>
<span class="t" style="top:1055.00px;font-size:19.6px;color:#fff;left:1800.80px;transform-origin:50% 50%;transform:translateX(-50%);">40</span>
<span class="t" style="top:1055.00px;font-size:19.6px;color:#fff;left:1888.20px;transform-origin:50% 50%;transform:translateX(-50%);">50</span>
<span class="t" style="top:1055.00px;font-size:19.6px;color:#fff;left:1975.60px;transform-origin:50% 50%;transform:translateX(-50%);">60</span>
<span class="t" style="top:1055.00px;font-size:19.6px;color:#fff;left:2063.00px;transform-origin:50% 50%;transform:translateX(-50%);">70</span>
<span class="t" style="top:1055.00px;font-size:19.6px;color:#fff;left:2150.40px;transform-origin:50% 50%;transform:translateX(-50%);">80</span>
<span class="t" style="top:1055.00px;font-size:19.6px;color:#fff;left:2237.80px;transform-origin:50% 50%;transform:translateX(-50%);">90</span>
<span class="t" style="top:1055.00px;font-size:19.6px;color:#fff;left:2325.20px;transform-origin:50% 50%;transform:translateX(-50%);">100</span>
<div style="left:1141.2px;top:1082.4px;width:1228.8px;height:35.25px;background:#424242;"></div>
<span class="t" style="top:1090.00px;font-size:22.4px;color:#f6f6f6;font-weight:bold;left:1158.23px;transform-origin:0 50%;transform:scaleX(0.9204);">x: CIE31</span>
<span class="t" style="top:1089.00px;font-size:22.8px;color:#f6f6f6;left:1353.80px;transform-origin:0 50%;transform:scaleX(0.9210);">0.21</span>
<span class="t" style="top:1089.00px;font-size:22.8px;color:#f6f6f6;left:1500.70px;transform-origin:0 50%;transform:scaleX(0.9210);">0.31</span>
<span class="t" style="top:1089.00px;font-size:22.8px;color:#f6f6f6;left:1588.10px;transform-origin:0 50%;transform:scaleX(0.9210);">0.32</span>
<span class="t" style="top:1089.00px;font-size:22.8px;color:#f6f6f6;left:1675.50px;transform-origin:0 50%;transform:scaleX(0.9210);">0.31</span>
<span class="t" style="top:1089.00px;font-size:22.8px;color:#f6f6f6;left:1762.90px;transform-origin:0 50%;transform:scaleX(0.9210);">0.31</span>
<span class="t" style="top:1089.00px;font-size:22.8px;color:#f6f6f6;left:1850.30px;transform-origin:0 50%;transform:scaleX(0.9210);">0.31</span>
<span class="t" style="top:1089.00px;font-size:22.8px;color:#f6f6f6;left:1937.70px;transform-origin:0 50%;transform:scaleX(0.9210);">0.31</span>
<span class="t" style="top:1089.00px;font-size:22.8px;color:#f6f6f6;left:2025.10px;transform-origin:0 50%;transform:scaleX(0.9210);">0.31</span>
<span class="t" style="top:1089.00px;font-size:22.8px;color:#f6f6f6;left:2112.50px;transform-origin:0 50%;transform:scaleX(0.9210);">0.31</span>
<span class="t" style="top:1089.00px;font-size:22.8px;color:#f6f6f6;left:2199.90px;transform-origin:0 50%;transform:scaleX(0.9210);">0.31</span>
<span class="t" style="top:1089.00px;font-size:22.8px;color:#f6f6f6;left:2287.30px;transform-origin:0 50%;transform:scaleX(0.9210);">0.31</span>
<div style="left:1141.2px;top:1117.35px;width:1228.8px;height:35.25px;background:#808080;"></div>
<span class="t" style="top:1125.00px;font-size:22.4px;color:#ededed;font-weight:bold;left:1158.23px;transform-origin:0 50%;transform:scaleX(0.9204);">y: CIE31</span>
<span class="t" style="top:1124.00px;font-size:22.8px;color:#ededed;left:1353.80px;transform-origin:0 50%;transform:scaleX(0.9210);">0.19</span>
<span class="t" style="top:1124.00px;font-size:22.8px;color:#ededed;left:1500.70px;transform-origin:0 50%;transform:scaleX(0.9210);">0.33</span>
<span class="t" style="top:1124.00px;font-size:22.8px;color:#ededed;left:1588.10px;transform-origin:0 50%;transform:scaleX(0.9210);">0.34</span>
<span class="t" style="top:1124.00px;font-size:22.8px;color:#ededed;left:1675.50px;transform-origin:0 50%;transform:scaleX(0.9210);">0.33</span>
<span class="t" style="top:1124.00px;font-size:22.8px;color:#ededed;left:1762.90px;transform-origin:0 50%;transform:scaleX(0.9210);">0.33</span>
<span class="t" style="top:1124.00px;font-size:22.8px;color:#ededed;left:1850.30px;transform-origin:0 50%;transform:scaleX(0.9210);">0.33</span>
<span class="t" style="top:1124.00px;font-size:22.8px;color:#ededed;left:1937.70px;transform-origin:0 50%;transform:scaleX(0.9210);">0.33</span>
<span class="t" style="top:1124.00px;font-size:22.8px;color:#ededed;left:2025.10px;transform-origin:0 50%;transform:scaleX(0.9210);">0.33</span>
<span class="t" style="top:1124.00px;font-size:22.8px;color:#ededed;left:2112.50px;transform-origin:0 50%;transform:scaleX(0.9210);">0.33</span>
<span class="t" style="top:1124.00px;font-size:22.8px;color:#ededed;left:2199.90px;transform-origin:0 50%;transform:scaleX(0.9210);">0.33</span>
<span class="t" style="top:1124.00px;font-size:22.8px;color:#ededed;left:2287.30px;transform-origin:0 50%;transform:scaleX(0.9210);">0.33</span>
<div style="left:1141.2px;top:1152.3px;width:1228.8px;height:35.25px;background:#424242;"></div>
<span class="t" style="top:1160.00px;font-size:22.4px;color:#f6f6f6;font-weight:bold;left:1158.23px;transform-origin:0 50%;transform:scaleX(0.9000);">Y</span>
<span class="t" style="top:1159.00px;font-size:22.8px;color:#f6f6f6;left:1353.80px;transform-origin:0 50%;transform:scaleX(0.9210);">0.03</span>
<span class="t" style="top:1159.00px;font-size:22.8px;color:#f6f6f6;left:1500.70px;transform-origin:0 50%;transform:scaleX(0.9210);">1.41</span>
<span class="t" style="top:1159.00px;font-size:22.8px;color:#f6f6f6;left:1588.10px;transform-origin:0 50%;transform:scaleX(0.9210);">4.91</span>
<span class="t" style="top:1159.00px;font-size:22.8px;color:#f6f6f6;left:1675.50px;transform-origin:0 50%;transform:scaleX(0.9210);">11.54</span>
<span class="t" style="top:1159.00px;font-size:22.8px;color:#f6f6f6;left:1762.90px;transform-origin:0 50%;transform:scaleX(0.9210);">21.74</span>
<span class="t" style="top:1159.00px;font-size:22.8px;color:#f6f6f6;left:1850.30px;transform-origin:0 50%;transform:scaleX(0.9210);">35.67</span>
<span class="t" style="top:1159.00px;font-size:22.8px;color:#f6f6f6;left:1937.70px;transform-origin:0 50%;transform:scaleX(0.9210);">53.85</span>
<span class="t" style="top:1159.00px;font-size:22.8px;color:#f6f6f6;left:2025.10px;transform-origin:0 50%;transform:scaleX(0.9210);">76.24</span>
<span class="t" style="top:1159.00px;font-size:22.8px;color:#f6f6f6;left:2112.50px;transform-origin:0 50%;transform:scaleX(0.9210);">103.82</span>
<span class="t" style="top:1159.00px;font-size:22.8px;color:#f6f6f6;left:2199.90px;transform-origin:0 50%;transform:scaleX(0.9210);">136.94</span>
<span class="t" style="top:1159.00px;font-size:22.8px;color:#f6f6f6;left:2287.30px;transform-origin:0 50%;transform:scaleX(0.9210);">173.78</span>
<div style="left:1141.2px;top:1187.25px;width:1228.8px;height:35.25px;background:#808080;"></div>
<span class="t" style="top:1195.00px;font-size:22.4px;color:#ededed;font-weight:bold;left:1158.23px;transform-origin:0 50%;transform:scaleX(0.9704);">Target Y</span>
<span class="t" style="top:1194.00px;font-size:22.8px;color:#ededed;left:1353.80px;transform-origin:0 50%;transform:scaleX(0.9210);">0.00</span>
<span class="t" style="top:1194.00px;font-size:22.8px;color:#ededed;left:1500.70px;transform-origin:0 50%;transform:scaleX(0.9210);">1.80</span>
<span class="t" style="top:1194.00px;font-size:22.8px;color:#ededed;left:1588.10px;transform-origin:0 50%;transform:scaleX(0.9210);">5.75</span>
<span class="t" style="top:1194.00px;font-size:22.8px;color:#ededed;left:1675.50px;transform-origin:0 50%;transform:scaleX(0.9210);">12.56</span>
<span class="t" style="top:1194.00px;font-size:22.8px;color:#ededed;left:1762.90px;transform-origin:0 50%;transform:scaleX(0.9210);">23.09</span>
<span class="t" style="top:1194.00px;font-size:22.8px;color:#ededed;left:1850.30px;transform-origin:0 50%;transform:scaleX(0.9210);">37.51</span>
<span class="t" style="top:1194.00px;font-size:22.8px;color:#ededed;left:1937.70px;transform-origin:0 50%;transform:scaleX(0.9210);">55.36</span>
<span class="t" style="top:1194.00px;font-size:22.8px;color:#ededed;left:2025.10px;transform-origin:0 50%;transform:scaleX(0.9210);">77.37</span>
<span class="t" style="top:1194.00px;font-size:22.8px;color:#ededed;left:2112.50px;transform-origin:0 50%;transform:scaleX(0.9210);">104.93</span>
<span class="t" style="top:1194.00px;font-size:22.8px;color:#ededed;left:2199.90px;transform-origin:0 50%;transform:scaleX(0.9210);">137.51</span>
<span class="t" style="top:1194.00px;font-size:22.8px;color:#ededed;left:2287.30px;transform-origin:0 50%;transform:scaleX(0.9210);">173.78</span>
<div style="left:1141.2px;top:1222.2px;width:1228.8px;height:35.25px;background:#424242;"></div>
<span class="t" style="top:1230.00px;font-size:22.4px;color:#f6f6f6;font-weight:bold;left:1158.23px;transform-origin:0 50%;transform:scaleX(0.9790);">Gamma Log/Log</span>
<span class="t" style="top:1229.00px;font-size:22.8px;color:#f6f6f6;left:1353.80px;transform-origin:0 50%;transform:scaleX(0.9210);">1.28</span>
<span class="t" style="top:1229.00px;font-size:22.8px;color:#f6f6f6;left:1500.70px;transform-origin:0 50%;transform:scaleX(0.9210);">2.11</span>
<span class="t" style="top:1229.00px;font-size:22.8px;color:#f6f6f6;left:1588.10px;transform-origin:0 50%;transform:scaleX(0.9210);">2.22</span>
<span class="t" style="top:1229.00px;font-size:22.8px;color:#f6f6f6;left:1675.50px;transform-origin:0 50%;transform:scaleX(0.9210);">2.24</span>
<span class="t" style="top:1229.00px;font-size:22.8px;color:#f6f6f6;left:1762.90px;transform-origin:0 50%;transform:scaleX(0.9210);">2.27</span>
<span class="t" style="top:1229.00px;font-size:22.8px;color:#f6f6f6;left:1850.30px;transform-origin:0 50%;transform:scaleX(0.9210);">2.30</span>
<span class="t" style="top:1229.00px;font-size:22.8px;color:#f6f6f6;left:1937.70px;transform-origin:0 50%;transform:scaleX(0.9210);">2.29</span>
<span class="t" style="top:1229.00px;font-size:22.8px;color:#f6f6f6;left:2025.10px;transform-origin:0 50%;transform:scaleX(0.9210);">2.29</span>
<span class="t" style="top:1229.00px;font-size:22.8px;color:#f6f6f6;left:2112.50px;transform-origin:0 50%;transform:scaleX(0.9210);">2.31</span>
<span class="t" style="top:1229.00px;font-size:22.8px;color:#f6f6f6;left:2199.90px;transform-origin:0 50%;transform:scaleX(0.9210);">2.31</span>
<span class="t" style="top:1229.00px;font-size:22.8px;color:#f6f6f6;left:2287.30px;transform-origin:0 50%;transform:scaleX(0.9210);">2.27</span>
<div style="left:1141.2px;top:1257.15px;width:1228.8px;height:35.25px;background:#808080;"></div>
<span class="t" style="top:1264.00px;font-size:22.4px;color:#ededed;font-weight:bold;left:1158.23px;transform-origin:0 50%;transform:scaleX(0.8678);">CCT</span>
<span class="t" style="top:1264.00px;font-size:22.8px;color:#ededed;left:1353.80px;transform-origin:0 50%;transform:scaleX(0.9210);">246503173.00</span>
<span class="t" style="top:1264.00px;font-size:22.8px;color:#ededed;left:1500.70px;transform-origin:0 50%;transform:scaleX(0.9210);">6592.00</span>
<span class="t" style="top:1264.00px;font-size:22.8px;color:#ededed;left:1588.10px;transform-origin:0 50%;transform:scaleX(0.9210);">6292.00</span>
<span class="t" style="top:1264.00px;font-size:22.8px;color:#ededed;left:1675.50px;transform-origin:0 50%;transform:scaleX(0.9210);">6529.00</span>
<span class="t" style="top:1264.00px;font-size:22.8px;color:#ededed;left:1762.90px;transform-origin:0 50%;transform:scaleX(0.9210);">6513.00</span>
<span class="t" style="top:1264.00px;font-size:22.8px;color:#ededed;left:1850.30px;transform-origin:0 50%;transform:scaleX(0.9210);">6540.00</span>
<span class="t" style="top:1264.00px;font-size:22.8px;color:#ededed;left:1937.70px;transform-origin:0 50%;transform:scaleX(0.9210);">6539.00</span>
<span class="t" style="top:1264.00px;font-size:22.8px;color:#ededed;left:2025.10px;transform-origin:0 50%;transform:scaleX(0.9210);">6549.00</span>
<span class="t" style="top:1264.00px;font-size:22.8px;color:#ededed;left:2112.50px;transform-origin:0 50%;transform:scaleX(0.9210);">6537.00</span>
<span class="t" style="top:1264.00px;font-size:22.8px;color:#ededed;left:2199.90px;transform-origin:0 50%;transform:scaleX(0.9210);">6523.00</span>
<span class="t" style="top:1264.00px;font-size:22.8px;color:#ededed;left:2287.30px;transform-origin:0 50%;transform:scaleX(0.9210);">6523.00</span>
<div style="left:1141.2px;top:1292.1px;width:1228.8px;height:35.25px;background:#424242;"></div>
<span class="t" style="top:1299.00px;font-size:22.4px;color:#f6f6f6;font-weight:bold;left:1158.23px;transform-origin:0 50%;transform:scaleX(0.9711);">ΔE 2000</span>
<span class="t" style="top:1299.00px;font-size:22.8px;color:#f6f6f6;left:1353.80px;transform-origin:0 50%;transform:scaleX(0.9210);">0.59</span>
<span class="t" style="top:1299.00px;font-size:22.8px;color:#f6f6f6;left:1500.70px;transform-origin:0 50%;transform:scaleX(0.9210);">1.53</span>
<span class="t" style="top:1299.00px;font-size:22.8px;color:#f6f6f6;left:1588.10px;transform-origin:0 50%;transform:scaleX(0.9210);">2.20</span>
<span class="t" style="top:1299.00px;font-size:22.8px;color:#f6f6f6;left:1675.50px;transform-origin:0 50%;transform:scaleX(0.9210);">1.33</span>
<span class="t" style="top:1299.00px;font-size:22.8px;color:#f6f6f6;left:1762.90px;transform-origin:0 50%;transform:scaleX(0.9210);">1.07</span>
<span class="t" style="top:1299.00px;font-size:22.8px;color:#f6f6f6;left:1850.30px;transform-origin:0 50%;transform:scaleX(0.9210);">1.21</span>
<span class="t" style="top:1299.00px;font-size:22.8px;color:#f6f6f6;left:1937.70px;transform-origin:0 50%;transform:scaleX(0.9210);">1.01</span>
<span class="t" style="top:1299.00px;font-size:22.8px;color:#f6f6f6;left:2025.10px;transform-origin:0 50%;transform:scaleX(0.9210);">0.88</span>
<span class="t" style="top:1299.00px;font-size:22.8px;color:#f6f6f6;left:2112.50px;transform-origin:0 50%;transform:scaleX(0.9210);">0.95</span>
<span class="t" style="top:1299.00px;font-size:22.8px;color:#f6f6f6;left:2199.90px;transform-origin:0 50%;transform:scaleX(0.9210);">0.19</span>
<span class="t" style="top:1299.00px;font-size:22.8px;color:#f6f6f6;left:2287.30px;transform-origin:0 50%;transform:scaleX(0.9210);">0.17</span>
<div style="left:2368.6px;top:1043.4px;width:1.6px;height:283.8px;background:#0a0a0a;"></div>
<div style="left:301.6px;top:1435.6px;width:157.8px;height:91.6px;border-radius:7px;background:linear-gradient(#a8a8a8 0,#969696 6%,#7e7e7e 45%,#5e5e5e 100%);box-shadow:inset 0 1px 0 #b4b4b4;"></div>
<div style="left:309.1px;top:1443.1px;width:142.9px;height:53.9px;border-radius:6px;background:#000000;box-shadow:inset 0 1px 2px rgba(0,0,0,.35), 0 1px 0 rgba(255,255,255,.18);"></div>
<span class="t" style="top:1508.00px;font-size:14.6px;color:#2b2b2b;font-weight:bold;left:380.50px;transform-origin:50% 50%;transform:translateX(-50%);">0</span>
<div style="left:462.82px;top:1435.6px;width:157.8px;height:91.6px;border-radius:7px;background:linear-gradient(#a8a8a8 0,#969696 6%,#7e7e7e 45%,#5e5e5e 100%);box-shadow:inset 0 1px 0 #b4b4b4;"></div>
<div style="left:470.32px;top:1443.1px;width:142.9px;height:53.9px;border-radius:6px;background:#1a1a1a;box-shadow:inset 0 1px 2px rgba(0,0,0,.35), 0 1px 0 rgba(255,255,255,.18);"></div>
<span class="t" style="top:1508.00px;font-size:14.6px;color:#2b2b2b;font-weight:bold;left:541.72px;transform-origin:50% 50%;transform:translateX(-50%);">10</span>
<div style="left:624.04px;top:1435.6px;width:157.8px;height:91.6px;border-radius:7px;background:linear-gradient(#a8a8a8 0,#969696 6%,#7e7e7e 45%,#5e5e5e 100%);box-shadow:inset 0 1px 0 #b4b4b4;"></div>
<div style="left:631.54px;top:1443.1px;width:142.9px;height:53.9px;border-radius:6px;background:#333333;box-shadow:inset 0 1px 2px rgba(0,0,0,.35), 0 1px 0 rgba(255,255,255,.18);"></div>
<span class="t" style="top:1508.00px;font-size:14.6px;color:#2b2b2b;font-weight:bold;left:702.94px;transform-origin:50% 50%;transform:translateX(-50%);">20</span>
<div style="left:785.26px;top:1435.6px;width:157.8px;height:91.6px;border-radius:7px;background:linear-gradient(#a8a8a8 0,#969696 6%,#7e7e7e 45%,#5e5e5e 100%);box-shadow:inset 0 1px 0 #b4b4b4;"></div>
<div style="left:792.76px;top:1443.1px;width:142.9px;height:53.9px;border-radius:6px;background:#4d4d4d;box-shadow:inset 0 1px 2px rgba(0,0,0,.35), 0 1px 0 rgba(255,255,255,.18);"></div>
<span class="t" style="top:1508.00px;font-size:14.6px;color:#2b2b2b;font-weight:bold;left:864.16px;transform-origin:50% 50%;transform:translateX(-50%);">30</span>
<div style="left:946.48px;top:1435.6px;width:157.8px;height:91.6px;border-radius:7px;background:linear-gradient(#a8a8a8 0,#969696 6%,#7e7e7e 45%,#5e5e5e 100%);box-shadow:inset 0 1px 0 #b4b4b4;"></div>
<div style="left:953.98px;top:1443.1px;width:142.9px;height:53.9px;border-radius:6px;background:#666666;box-shadow:inset 0 1px 2px rgba(0,0,0,.35), 0 1px 0 rgba(255,255,255,.18);"></div>
<span class="t" style="top:1508.00px;font-size:14.6px;color:#2b2b2b;font-weight:bold;left:1025.38px;transform-origin:50% 50%;transform:translateX(-50%);">40</span>
<div style="left:1107.7px;top:1435.6px;width:157.8px;height:91.6px;border-radius:7px;background:linear-gradient(#a8a8a8 0,#969696 6%,#7e7e7e 45%,#5e5e5e 100%);box-shadow:inset 0 1px 0 #b4b4b4;"></div>
<div style="left:1115.2px;top:1443.1px;width:142.9px;height:53.9px;border-radius:6px;background:#808080;box-shadow:inset 0 1px 2px rgba(0,0,0,.35), 0 1px 0 rgba(255,255,255,.18);"></div>
<span class="t" style="top:1508.00px;font-size:14.6px;color:#2b2b2b;font-weight:bold;left:1186.60px;transform-origin:50% 50%;transform:translateX(-50%);">50</span>
<div style="left:1268.92px;top:1435.6px;width:157.8px;height:91.6px;border-radius:7px;background:linear-gradient(#a8a8a8 0,#969696 6%,#7e7e7e 45%,#5e5e5e 100%);box-shadow:inset 0 1px 0 #b4b4b4;"></div>
<div style="left:1276.42px;top:1443.1px;width:142.9px;height:53.9px;border-radius:6px;background:#999999;box-shadow:inset 0 1px 2px rgba(0,0,0,.35), 0 1px 0 rgba(255,255,255,.18);"></div>
<span class="t" style="top:1508.00px;font-size:14.6px;color:#2b2b2b;font-weight:bold;left:1347.82px;transform-origin:50% 50%;transform:translateX(-50%);">60</span>
<div style="left:1430.14px;top:1435.6px;width:157.8px;height:91.6px;border-radius:7px;background:linear-gradient(#a8a8a8 0,#969696 6%,#7e7e7e 45%,#5e5e5e 100%);box-shadow:inset 0 1px 0 #b4b4b4;"></div>
<div style="left:1437.64px;top:1443.1px;width:142.9px;height:53.9px;border-radius:6px;background:#b3b3b3;box-shadow:inset 0 1px 2px rgba(0,0,0,.35), 0 1px 0 rgba(255,255,255,.18);"></div>
<span class="t" style="top:1508.00px;font-size:14.6px;color:#2b2b2b;font-weight:bold;left:1509.04px;transform-origin:50% 50%;transform:translateX(-50%);">70</span>
<div style="left:1591.36px;top:1435.6px;width:157.8px;height:91.6px;border-radius:7px;background:linear-gradient(#a8a8a8 0,#969696 6%,#7e7e7e 45%,#5e5e5e 100%);box-shadow:inset 0 1px 0 #b4b4b4;"></div>
<div style="left:1598.86px;top:1443.1px;width:142.9px;height:53.9px;border-radius:6px;background:#cccccc;box-shadow:inset 0 1px 2px rgba(0,0,0,.35), 0 1px 0 rgba(255,255,255,.18);"></div>
<span class="t" style="top:1508.00px;font-size:14.6px;color:#2b2b2b;font-weight:bold;left:1670.26px;transform-origin:50% 50%;transform:translateX(-50%);">80</span>
<div style="left:1752.58px;top:1435.6px;width:157.8px;height:91.6px;border-radius:7px;background:linear-gradient(#a8a8a8 0,#969696 6%,#7e7e7e 45%,#5e5e5e 100%);box-shadow:inset 0 1px 0 #b4b4b4;"></div>
<div style="left:1760.08px;top:1443.1px;width:142.9px;height:53.9px;border-radius:6px;background:#e6e6e6;box-shadow:inset 0 1px 2px rgba(0,0,0,.35), 0 1px 0 rgba(255,255,255,.18);"></div>
<span class="t" style="top:1508.00px;font-size:14.6px;color:#2b2b2b;font-weight:bold;left:1831.48px;transform-origin:50% 50%;transform:translateX(-50%);">90</span>
<div style="left:1913.8px;top:1435.6px;width:157.8px;height:91.6px;border-radius:7px;background:linear-gradient(#1c1c1c,#242424 50%,#2e2e2e);"></div>
<div style="left:1921.3px;top:1443.1px;width:142.9px;height:53.9px;border-radius:6px;background:#ffffff;"></div>
<span class="t" style="top:1508.00px;font-size:14.6px;color:#fff;font-weight:bold;left:1992.70px;transform-origin:50% 50%;transform:translateX(-50%);">100</span>
<div style="left:2076px;top:1435.6px;width:72.2px;height:27.2px;border-radius:7px 7px 0 0;background:linear-gradient(#aeaeae 0,#a2a2a2 6%,#868686 50%,#676767 100%);box-shadow:inset 0 1px 0 #b4b4b4;"></div>
<div style="left:2100.8px;top:1438.2px;width:22.2px;height:22.2px;border-radius:50%;background:linear-gradient(#6c6c6c,#8a8a8a 60%,#a4a4a4);"></div>
<svg style="left:2104px;top:1442px" width="16" height="12" viewBox="2104 1442 16 12"><path d="M2105.4 1452.2h13l-6.5 -7z" fill="#2c2c2c"/></svg>
<div style="left:2076px;top:1463.8px;width:72.2px;height:64.2px;border-radius:0 0 7px 7px;background:linear-gradient(#aeaeae 0,#a2a2a2 6%,#868686 50%,#676767 100%);box-shadow:inset 0 1px 0 #a8a8a8;"></div>
<div style="left:2088px;top:1471.8px;width:47.4px;height:47.2px;border-radius:8px;border:3.4px solid #262626;background:linear-gradient(#b4b4b4 0,#a6a6a6 50%,#8c8c8c 50%,#9a9a9a 100%);"></div>
<div style="left:2101.8px;top:1485.3px;width:20.6px;height:20.2px;background:linear-gradient(#1a1a1a 0,#141414 50%,#000 50%);"></div>
<div style="left:2149.4px;top:1435px;width:408.8px;height:45.4px;background:linear-gradient(#aeaeae 0,#a2a2a2 6%,#868686 50%,#676767 100%);border-radius:6px 6px 0 0;box-shadow:inset 0 1px 0 #bcbcbc;"></div>
<div style="left:2218.4px;top:1435.6px;width:2.4px;height:44.8px;background:linear-gradient(90deg,#383838 0,#383838 55%,#a4a4a4 55%);"></div>
<div style="left:2285.6px;top:1435.6px;width:2.4px;height:44.8px;background:linear-gradient(90deg,#383838 0,#383838 55%,#a4a4a4 55%);"></div>
<div style="left:2352.9px;top:1435.6px;width:2.4px;height:44.8px;background:linear-gradient(90deg,#383838 0,#383838 55%,#a4a4a4 55%);"></div>
<div style="left:2420.9px;top:1435.6px;width:2.4px;height:44.8px;background:linear-gradient(90deg,#383838 0,#383838 55%,#a4a4a4 55%);"></div>
<div style="left:2488.2px;top:1435.6px;width:2.4px;height:44.8px;background:linear-gradient(90deg,#383838 0,#383838 55%,#a4a4a4 55%);"></div>
<div style="left:2149.4px;top:1481.9px;width:204.4px;height:46.1px;background:linear-gradient(#aeaeae 0,#a2a2a2 6%,#868686 50%,#676767 100%);border-radius:6px 0 0 0;box-shadow:inset 0 1px 0 #bcbcbc;"></div>
<div style="left:2354.6px;top:1481.9px;width:203.6px;height:46.1px;background:linear-gradient(#aeaeae 0,#a2a2a2 6%,#868686 50%,#676767 100%);border-radius:0 6px 0 0;box-shadow:inset 0 1px 0 #bcbcbc;"></div>
<div style="left:2353.2px;top:1481.9px;width:1.8px;height:46.1px;background:#363636;"></div>
<div style="left:2169px;top:1443.2px;width:30px;height:30px;border-radius:50%;background:linear-gradient(#666 0,#848484 55%,#aaa 100%);"></div>
<div style="left:2237.4px;top:1443.2px;width:30px;height:30px;border-radius:50%;background:linear-gradient(#666 0,#848484 55%,#aaa 100%);"></div>
<div style="left:2305.4px;top:1443.2px;width:30px;height:30px;border-radius:50%;background:linear-gradient(#666 0,#848484 55%,#aaa 100%);"></div>
<div style="left:2373.1px;top:1443.2px;width:30px;height:30px;border-radius:50%;background:linear-gradient(#666 0,#848484 55%,#aaa 100%);"></div>
<div style="left:2440.7px;top:1443.2px;width:30px;height:30px;border-radius:50%;background:linear-gradient(#666 0,#848484 55%,#aaa 100%);"></div>
<div style="left:2509.4px;top:1443.2px;width:30px;height:30px;border-radius:50%;background:linear-gradient(#666 0,#848484 55%,#aaa 100%);"></div>
<div style="left:2181.5px;top:1489.8px;width:29.2px;height:29.2px;border-radius:50%;background:linear-gradient(#666 0,#848484 55%,#aaa 100%);"></div>
<div style="left:2500.8px;top:1489.8px;width:29.2px;height:29.2px;border-radius:50%;background:linear-gradient(#666 0,#848484 55%,#aaa 100%);"></div>
<span class="t" style="top:1490.00px;font-size:31.4px;color:#343434;left:2235.24px;transform-origin:0 50%;transform:scaleX(1.1077);text-shadow:0 1px 0 rgba(255,255,255,.28);-webkit-text-stroke:0.6px #323232;">Back</span>
<span class="t" style="top:1490.00px;font-size:31.4px;color:#343434;left:2394.94px;transform-origin:0 50%;transform:scaleX(1.2226);text-shadow:0 1px 0 rgba(255,255,255,.28);-webkit-text-stroke:0.6px #323232;">Next</span>
<div style="left:2557.4px;top:34px;width:2.6px;height:1494px;background:linear-gradient(90deg,rgba(26,26,26,0),#1c1c1c 70%);"></div>
<svg style="left:0;top:0;pointer-events:none" width="2560" height="1528" viewBox="0 0 2560 1528" fill="none"><path d="M396.7 403.2L396.7 777.9" stroke="#1a801a" stroke-width="2"/><path d="M469.1 403.2L469.1 777.9" stroke="#f4ea2a" stroke-width="2.2"/><path d="M721.4 403.2L721.4 777.9" stroke="#d02424" stroke-width="2.2"/><rect x="361.6" y="403.2" width="539.2" height="374.7" fill="none" stroke="#9c9c9c" stroke-width="2.2"/><path d="M352.6 777.9L361.6 777.9" stroke="#cfcfcf" stroke-width="2"/><path d="M352.6 743.8L361.6 743.8" stroke="#cfcfcf" stroke-width="2"/><path d="M352.6 709.8L361.6 709.8" stroke="#cfcfcf" stroke-width="2"/><path d="M352.6 675.7L361.6 675.7" stroke="#cfcfcf" stroke-width="2"/><path d="M352.6 641.6L361.6 641.6" stroke="#cfcfcf" stroke-width="2"/><path d="M352.6 607.6L361.6 607.6" stroke="#cfcfcf" stroke-width="2"/><path d="M352.6 573.5L361.6 573.5" stroke="#cfcfcf" stroke-width="2"/><path d="M352.6 539.5L361.6 539.5" stroke="#cfcfcf" stroke-width="2"/><path d="M352.6 505.4L361.6 505.4" stroke="#cfcfcf" stroke-width="2"/><path d="M352.6 471.3L361.6 471.3" stroke="#cfcfcf" stroke-width="2"/><path d="M352.6 437.3L361.6 437.3" stroke="#cfcfcf" stroke-width="2"/><path d="M352.6 403.2L361.6 403.2" stroke="#cfcfcf" stroke-width="2"/><path d="M969.1 330.2L977.1 330.2" stroke="#d8d8d8" stroke-width="2.2"/><path d="M977.1 386.4L1675.0 386.4" stroke="#9c9c9c" stroke-width="2"/><path d="M969.1 386.4L977.1 386.4" stroke="#d8d8d8" stroke-width="2.2"/><path d="M977.1 443.7L1675.0 443.7" stroke="#9c9c9c" stroke-width="2"/><path d="M969.1 443.7L977.1 443.7" stroke="#d8d8d8" stroke-width="2.2"/><path d="M977.1 498.2L1675.0 498.2" stroke="#9c9c9c" stroke-width="2"/><path d="M969.1 498.2L977.1 498.2" stroke="#d8d8d8" stroke-width="2.2"/><path d="M977.1 555.9L1675.0 555.9" stroke="#9c9c9c" stroke-width="2"/><path d="M969.1 555.9L977.1 555.9" stroke="#d8d8d8" stroke-width="2.2"/><path d="M977.1 610.7L1675.0 610.7" stroke="#9c9c9c" stroke-width="2"/><path d="M969.1 610.7L977.1 610.7" stroke="#d8d8d8" stroke-width="2.2"/><path d="M977.1 668.0L1675.0 668.0" stroke="#9c9c9c" stroke-width="2"/><path d="M969.1 668.0L977.1 668.0" stroke="#d8d8d8" stroke-width="2.2"/><path d="M977.1 723.7L1675.0 723.7" stroke="#9c9c9c" stroke-width="2"/><path d="M969.1 723.7L977.1 723.7" stroke="#d8d8d8" stroke-width="2.2"/><path d="M969.1 778.1L977.1 778.1" stroke="#d8d8d8" stroke-width="2.2"/><path d="M977.1 778.0L977.1 786.4" stroke="#cfcfcf" stroke-width="2"/><path d="M1046.9 778.0L1046.9 786.4" stroke="#cfcfcf" stroke-width="2"/><path d="M1116.7 778.0L1116.7 786.4" stroke="#cfcfcf" stroke-width="2"/><path d="M1186.5 778.0L1186.5 786.4" stroke="#cfcfcf" stroke-width="2"/><path d="M1256.3 778.0L1256.3 786.4" stroke="#cfcfcf" stroke-width="2"/><path d="M1326.0 778.0L1326.0 786.4" stroke="#cfcfcf" stroke-width="2"/><path d="M1395.8 778.0L1395.8 786.4" stroke="#cfcfcf" stroke-width="2"/><path d="M1465.6 778.0L1465.6 786.4" stroke="#cfcfcf" stroke-width="2"/><path d="M1535.4 778.0L1535.4 786.4" stroke="#cfcfcf" stroke-width="2"/><path d="M1605.2 778.0L1605.2 786.4" stroke="#cfcfcf" stroke-width="2"/><path d="M1675.0 778.0L1675.0 786.4" stroke="#cfcfcf" stroke-width="2"/><rect x="977.1" y="330.2" width="697.9" height="447.9" fill="none" stroke="#9c9c9c" stroke-width="2.4"/><path d="M977.1 329.4L1675.0 329.4" stroke="#9c9c9c" stroke-width="2"/><clipPath id="cr"><rect x="978.1" y="331" width="696.9" height="446"/></clipPath><polyline points="977.1,551.4 1046.9,573.0 1116.7,572.7 1186.5,566.5 1256.3,565.2 1326.1,563.8 1395.8,557.3 1465.6,555.6 1535.4,554.5 1605.2,553.0 1675.0,552.2" fill="none" stroke="#0a7f10" stroke-width="3.8" stroke-linejoin="round" clip-path="url(#cr)"/><polyline points="977.1,554.8 1046.9,579.5 1116.7,577.3 1186.5,572.6 1256.3,567.5 1326.1,569.0 1395.8,564.7 1465.6,562.1 1535.4,562.1 1605.2,556.0 1675.0,555.2" fill="none" stroke="#f0101c" stroke-width="3.8" stroke-linejoin="round" clip-path="url(#cr)"/><polyline points="977.1,547.4 1046.9,576.4 1116.7,583.5 1186.5,570.2 1256.3,566.0 1326.1,565.4 1395.8,560.4 1465.6,558.2 1535.4,556.7 1605.2,552.3 1675.0,550.8" fill="none" stroke="#0808f4" stroke-width="4.2" stroke-linejoin="round" clip-path="url(#cr)"/><path d="M1764.3 381.0L2467.9 381.0" stroke="#9c9c9c" stroke-width="2"/><path d="M1756.3 381.0L1764.3 381.0" stroke="#d8d8d8" stroke-width="2.2"/><path d="M1764.3 435.8L2467.9 435.8" stroke="#9c9c9c" stroke-width="2"/><path d="M1756.3 435.8L1764.3 435.8" stroke="#d8d8d8" stroke-width="2.2"/><path d="M1764.3 493.1L2467.9 493.1" stroke="#9c9c9c" stroke-width="2"/><path d="M1756.3 493.1L1764.3 493.1" stroke="#d8d8d8" stroke-width="2.2"/><path d="M1764.3 548.3L2467.9 548.3" stroke="#9c9c9c" stroke-width="2"/><path d="M1756.3 548.3L1764.3 548.3" stroke="#d8d8d8" stroke-width="2.2"/><path d="M1764.3 605.6L2467.9 605.6" stroke="#9c9c9c" stroke-width="2"/><path d="M1756.3 605.6L1764.3 605.6" stroke="#d8d8d8" stroke-width="2.2"/><path d="M1764.3 660.9L2467.9 660.9" stroke="#9c9c9c" stroke-width="2"/><path d="M1756.3 660.9L1764.3 660.9" stroke="#d8d8d8" stroke-width="2.2"/><path d="M1764.3 716.2L2467.9 716.2" stroke="#9c9c9c" stroke-width="2"/><path d="M1756.3 716.2L1764.3 716.2" stroke="#d8d8d8" stroke-width="2.2"/><path d="M1764.3 773.0L2467.9 773.0" stroke="#9c9c9c" stroke-width="2"/><path d="M1756.3 773.0L1764.3 773.0" stroke="#d8d8d8" stroke-width="2.2"/><path d="M1764.3 778.0L1764.3 786.4" stroke="#cfcfcf" stroke-width="2"/><path d="M1834.7 778.0L1834.7 786.4" stroke="#cfcfcf" stroke-width="2"/><path d="M1905.0 778.0L1905.0 786.4" stroke="#cfcfcf" stroke-width="2"/><path d="M1975.4 778.0L1975.4 786.4" stroke="#cfcfcf" stroke-width="2"/><path d="M2045.7 778.0L2045.7 786.4" stroke="#cfcfcf" stroke-width="2"/><path d="M2116.1 778.0L2116.1 786.4" stroke="#cfcfcf" stroke-width="2"/><path d="M2186.5 778.0L2186.5 786.4" stroke="#cfcfcf" stroke-width="2"/><path d="M2256.8 778.0L2256.8 786.4" stroke="#cfcfcf" stroke-width="2"/><path d="M2327.2 778.0L2327.2 786.4" stroke="#cfcfcf" stroke-width="2"/><path d="M2397.5 778.0L2397.5 786.4" stroke="#cfcfcf" stroke-width="2"/><path d="M2467.9 778.0L2467.9 786.4" stroke="#cfcfcf" stroke-width="2"/><polyline points="1764.3,694.0 1771.3,615.8 1778.4,587.9 1785.4,566.5 1792.4,548.0 1799.5,532.9 1806.5,520.9 1813.6,511.2 1820.6,503.1 1827.6,496.2 1834.7,490.3 1841.7,485.1 1848.7,480.5 1855.8,476.4 1862.8,472.8 1869.8,469.5 1876.9,466.5 1883.9,463.7 1890.9,461.2 1898.0,458.9 1905.0,456.7 1919.1,452.9 1933.2,449.5 1947.2,446.6 1961.3,443.9 1975.4,441.6 1989.5,439.4 2003.5,437.5 2017.6,435.7 2031.7,434.1 2045.7,432.6 2059.8,431.2 2073.9,429.9 2088.0,428.8 2102.0,427.6 2116.1,426.6 2130.2,425.6 2144.2,424.7 2158.3,423.8 2172.4,423.0 2186.5,422.2 2200.5,421.5 2214.6,420.8 2228.7,420.1 2242.7,419.5 2256.8,418.9 2270.9,418.3 2285.0,417.7 2299.0,417.2 2313.1,416.7 2327.2,416.2 2341.3,415.7 2355.3,415.3 2369.4,414.9 2383.5,414.4 2397.5,414.0 2411.6,413.6 2425.7,413.3 2439.8,412.9 2453.8,412.5 2460.9,412.4 2466.9,412.2" fill="none" stroke="#f8f820" stroke-width="3.8" stroke-linejoin="round"/><polyline points="1764.3,694.0 1834.7,458.8 1905.0,428.8 1975.4,423.4 2045.7,415.0 2116.1,405.9 2186.5,407.1 2256.8,407.8 2327.2,403.1 2397.5,403.1 2467.9,412.5" fill="none" stroke="#8e8e8e" stroke-width="4" stroke-linejoin="round"/><rect x="1764.3" y="329.1" width="703.6" height="449.0" fill="none" stroke="#9c9c9c" stroke-width="2.2"/><path d="M795.6 1074.8L803.3 1074.8" stroke="#d8d8d8" stroke-width="2"/><path d="M795.6 1122.7L803.3 1122.7" stroke="#d8d8d8" stroke-width="2"/><path d="M795.6 1168.6L803.3 1168.6" stroke="#d8d8d8" stroke-width="2"/><path d="M795.6 1214.8L803.3 1214.8" stroke="#d8d8d8" stroke-width="2"/><path d="M795.6 1260.7L803.3 1260.7" stroke="#d8d8d8" stroke-width="2"/><path d="M816.9 1288.7L816.9 1297.4" stroke="#d8d8d8" stroke-width="2"/><path d="M882.0 1288.7L882.0 1297.4" stroke="#d8d8d8" stroke-width="2"/><path d="M946.3 1288.7L946.3 1297.4" stroke="#d8d8d8" stroke-width="2"/><path d="M1010.3 1288.7L1010.3 1297.4" stroke="#d8d8d8" stroke-width="2"/><path d="M1075.6 1288.7L1075.6 1297.4" stroke="#d8d8d8" stroke-width="2"/><clipPath id="cc"><rect x="805.3" y="1057.9" width="319.4" height="228.8"/></clipPath><path d="M838 1294.8L845.4 1288.7Q986 1173.4 1126.7 1094L1134 1090" fill="none" stroke="#000" stroke-width="4.8" clip-path="url(#cc)"/><circle cx="982.9" cy="1130.3" r="5.6" fill="#3c3c3c" stroke="#000" stroke-width="1.2"/><circle cx="949.5" cy="1152.3" r="5.6" fill="#1e1e1e" stroke="#000" stroke-width="1.2"/><circle cx="959" cy="1162" r="5.6" fill="#585858" stroke="#000" stroke-width="1.2"/><circle cx="959" cy="1169" r="5.6" fill="#cfcfcf" stroke="#000" stroke-width="1.2"/><rect x="955.2" y="1163.8" width="18.4" height="17.6" fill="none" stroke="#000" stroke-width="2"/><circle cx="962.4" cy="1172.3" r="5.3" fill="#fff" stroke="#000" stroke-width="1.9"/><rect x="2178" y="1452.2" width="12" height="12" fill="#2c2c2c"/><path d="M2247.8 1450.8v14.8l12.4 -7.4z" fill="#2c2c2c"/><path d="M2316.2000000000003 1451.2h-3.6v14h3.6M2324.6 1451.2h3.6v14h-3.6" fill="none" stroke="#2c2c2c" stroke-width="2.6"/><circle cx="2318.3" cy="1458.2" r="1.3" fill="#2c2c2c"/><circle cx="2322.5" cy="1458.2" r="1.3" fill="#2c2c2c"/><path d="M2388.1 1458.2c-2.6 -4.6 -9.6 -5 -9.6 0s7 4.6 9.6 0c2.6 -4.6 9.6 -5 9.6 0s-7 4.6 -9.6 0z" fill="none" stroke="#2c2c2c" stroke-width="2.6"/><path d="M2448.5 1457.0a7.4 7.4 0 0 1 12.6 -4.6" fill="none" stroke="#2c2c2c" stroke-width="3"/><path d="M2463.5 1448.8v7.4h-7.4z" fill="#2c2c2c"/><path d="M2462.8999999999996 1459.4a7.4 7.4 0 0 1 -12.6 4.6" fill="none" stroke="#2c2c2c" stroke-width="3"/><path d="M2447.8999999999996 1467.6000000000001v-7.4h7.4z" fill="#2c2c2c"/><path d="M2195.5 1498.0l-5.4 6.4l5.4 6.4M2202.1 1498.0l-5.4 6.4l5.4 6.4" fill="none" stroke="#2c2c2c" stroke-width="2.4"/><path d="M2516.7999999999997 1498.0l5.4 6.4l-5.4 6.4M2510.2 1498.0l5.4 6.4l-5.4 6.4" fill="none" stroke="#2c2c2c" stroke-width="2.4"/></svg>
</div></body></html>
